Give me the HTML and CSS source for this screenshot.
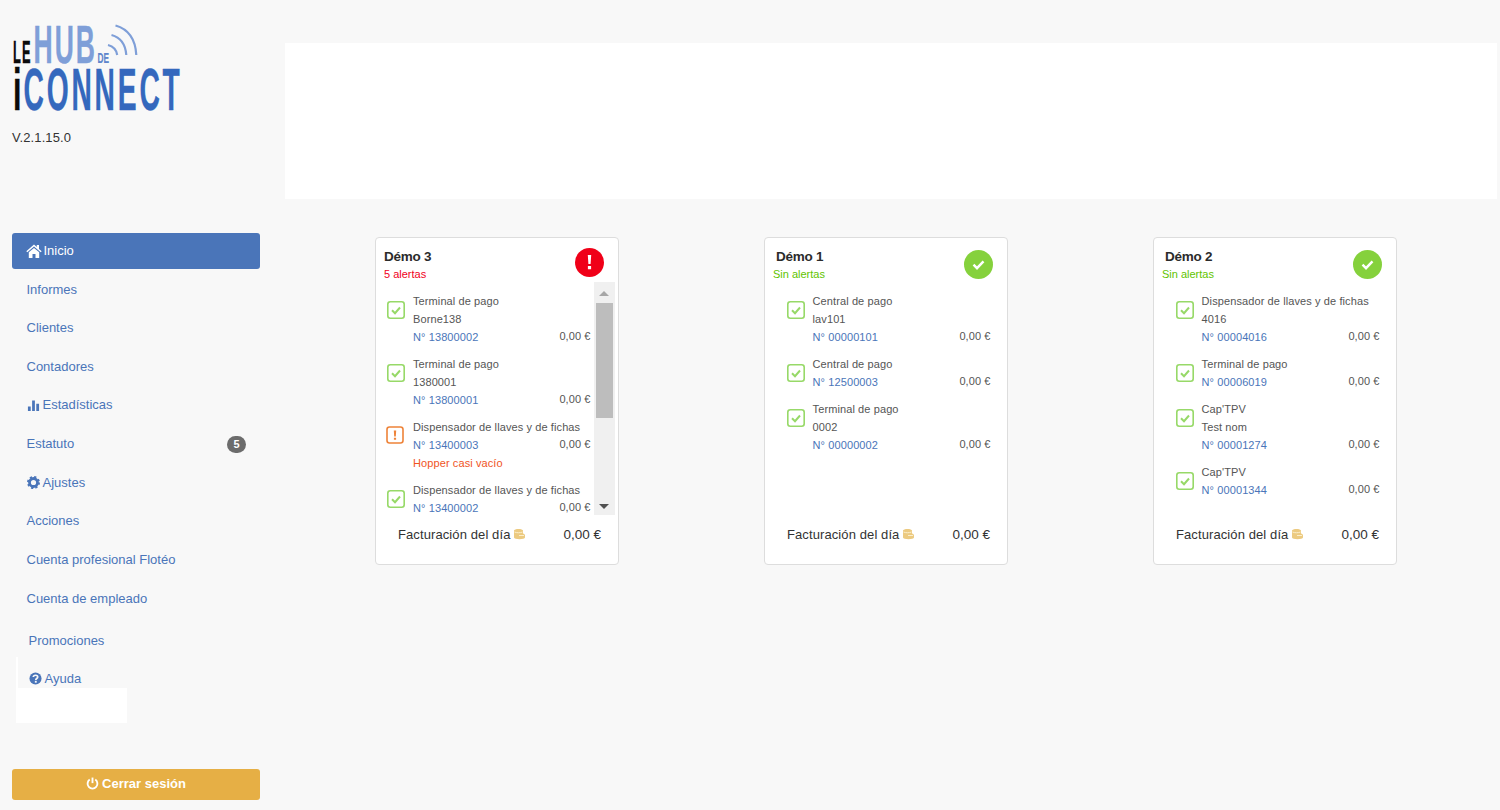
FILE: index.html
```html
<!DOCTYPE html>
<html lang="es">
<head>
<meta charset="utf-8">
<title>Le Hub de iConnect</title>
<link rel="stylesheet" href="styles.css">
</head>
<body>
<svg width="0" height="0" class="defs">
  <symbol id="check" viewBox="0 0 18 18">
    <rect x=".8" y=".8" width="16.400" height="16.400" rx="2.5" fill="#fff" stroke="#97d968" stroke-width="1.6"/>
    <path d="M5 9.200 8 12.200l5-5.700" fill="none" stroke="#97d968" stroke-width="2"/>
  </symbol>
  <symbol id="coin" viewBox="0 0 12 12">
    <path d="M1 2.600C1 .4 10 .4 10 2.600V5.500C11.200 5.800 12 6.500 12 7.500V9.500C12 11.800 1 11.800 1 9.500Z" fill="#ecca80"/>
    <path d="M1.500 4C3.500 5 7.500 5 9.500 4M6 7.500H11" fill="none" stroke="#fbeecb" stroke-width="1"/>
  </symbol>
</svg>
<aside class="sidebar">
  <svg class="logo" width="170" height="90" viewBox="12 25 170 90">
    <text class="lg lg-black" transform="translate(13 63) scale(.42 1)" font-size="30.5" letter-spacing="3">LE</text>
    <text class="lg lg-light" transform="translate(33.5 63) scale(.5 1)" font-size="53" letter-spacing="4">HUB</text>
    <text class="lg lg-mid" x="97.5" y="63" font-size="15.5" textLength="11.5" lengthAdjust="spacingAndGlyphs">DE</text>
    <text class="lg lg-black" x="13" y="110" font-size="60" textLength="8.5" lengthAdjust="spacingAndGlyphs">i</text>
    <text class="lg lg-blue" transform="translate(23.5 110) scale(.47 1)" font-size="60" letter-spacing="6">CONNECT</text>
    <path class="wave" d="M115.500 25.500Q135 31 136.300 55M111.500 35Q125 38.500 126.300 55M108 45Q116 47 117.200 55"/>
  </svg>
  <p class="version">V.2.1.15.0</p>
  <nav class="nav">
    <a class="nav-link active">
      <svg class="ic ic-home" viewBox="0 0 16 16"><path d="M8 1.500.3 8.300l1 1L8 3.600l6.700 5.700 1-1L13 6V2h-2.200v2.100ZM2.800 9.300V15h3.700v-4h3v4h3.700V9.300L8 5Z"/></svg>Inicio
    </a>
    <a class="nav-link">Informes</a>
    <a class="nav-link">Clientes</a>
    <a class="nav-link">Contadores</a>
    <a class="nav-link">
      <svg class="ic" viewBox="0 0 14 14"><path d="M1 8h3v5H1ZM5.500 1.500h3V13h-3ZM10 5h3v8h-3Z"/></svg>Estadísticas
    </a>
    <a class="nav-link">Estatuto<span class="badge">5</span></a>
    <a class="nav-link">
      <svg class="ic" viewBox="0 0 14 14"><circle cx="7" cy="7" r="4.300" fill="none" stroke="currentColor" stroke-width="3"/><circle cx="7" cy="7" r="6" fill="none" stroke="currentColor" stroke-width="2" stroke-dasharray="2.400 2.312"/></svg>Ajustes
    </a>
    <a class="nav-link">Acciones</a>
    <a class="nav-link">Cuenta profesional Flotéo</a>
    <a class="nav-link">Cuenta de empleado</a>
    <a class="nav-link nav-promo">Promociones</a>
    <a class="nav-link nav-help">
      <svg class="ic ic-help" viewBox="0 0 14 14"><circle cx="7" cy="7" r="6.500"/><path d="M4.600 5.400C4.800 2.900 9.400 2.900 9.400 5.400 9.400 7 7.300 7 7.300 8.500" fill="none" stroke="#f8f8f8" stroke-width="1.800"/><rect x="6.300" y="9.500" width="2" height="2" fill="#f8f8f8"/></svg>Ayuda
    </a>
  </nav>
  <div class="blank"></div>
  <a class="logout">
    <svg class="ic" viewBox="0 0 14 14"><path d="M4 2.800a5.300 5.300 0 1 0 6 0" fill="none" stroke="#fff" stroke-width="2"/><path d="M7 .6v6" stroke="#fff" stroke-width="2"/></svg>Cerrar sesión
  </a>
</aside>
<main class="main">
  <div class="banner"></div>
  <section class="cards">
    <article class="card card-scroll">
      <header class="card-head">
        <div class="titles"><h2>Démo 3</h2><p class="alerts bad">5 alertas</p></div>
        <svg class="status" viewBox="0 0 29 29"><circle cx="14.500" cy="14.500" r="14.500" fill="#f00018"/><path d="M12.800 7h3.400l-.6 9h-2.200ZM12.900 18h3.200v3.200h-3.200Z" fill="#fff"/></svg>
      </header>
      <div class="card-body">
        <div class="list">
          <div class="item">
            <svg class="box"><use href="#check"/></svg>
            <div class="info"><div>Terminal de pago</div><div>Borne138</div><div class="row"><span class="num">N° 13800002</span><span class="amt">0,00 €</span></div></div>
          </div>
          <div class="item">
            <svg class="box"><use href="#check"/></svg>
            <div class="info"><div>Terminal de pago</div><div>1380001</div><div class="row"><span class="num">N° 13800001</span><span class="amt">0,00 €</span></div></div>
          </div>
          <div class="item">
            <svg class="box box-warn" viewBox="0 0 18 18"><rect x="1" y="1" width="16" height="16" rx="2.500" fill="#fff" stroke="#ee8339" stroke-width="1.600"/><path d="M7.800 4.500h2.400l-.4 6H8.200ZM7.900 11.700h2.200v2.100H7.900Z" fill="#ee8339"/></svg>
            <div class="info"><div>Dispensador de llaves y de fichas</div><div class="row"><span class="num">N° 13400003</span><span class="amt">0,00 €</span></div><div class="warn">Hopper casi vacío</div></div>
          </div>
          <div class="item">
            <svg class="box"><use href="#check"/></svg>
            <div class="info"><div>Dispensador de llaves y de fichas</div><div class="row"><span class="num">N° 13400002</span><span class="amt">0,00 €</span></div></div>
          </div>
        </div>
        <div class="scrollbar">
          <span class="arrow up"></span>
          <span class="thumb"></span>
          <span class="arrow down"></span>
        </div>
      </div>
      <footer class="card-foot"><span class="foot-label">Facturación del día<svg class="coin"><use href="#coin"/></svg></span><span>0,00 €</span></footer>
    </article>

    <article class="card">
      <header class="card-head">
        <div class="titles"><h2 class="inset">Démo 1</h2><p class="alerts ok">Sin alertas</p></div>
        <svg class="status status-ok" viewBox="0 0 29 29"><circle cx="14.500" cy="14.500" r="14.500" fill="#85d13c"/><path d="M9.500 14.700l3.500 3.500 6.500-6.800" fill="none" stroke="#fff" stroke-width="2.400"/></svg>
      </header>
      <div class="card-body">
        <div class="list">
          <div class="item">
            <svg class="box"><use href="#check"/></svg>
            <div class="info"><div>Central de pago</div><div>lav101</div><div class="row"><span class="num">N° 00000101</span><span class="amt">0,00 €</span></div></div>
          </div>
          <div class="item">
            <svg class="box"><use href="#check"/></svg>
            <div class="info"><div>Central de pago</div><div class="row"><span class="num">N° 12500003</span><span class="amt">0,00 €</span></div></div>
          </div>
          <div class="item">
            <svg class="box"><use href="#check"/></svg>
            <div class="info"><div>Terminal de pago</div><div>0002</div><div class="row"><span class="num">N° 00000002</span><span class="amt">0,00 €</span></div></div>
          </div>
        </div>
      </div>
      <footer class="card-foot"><span class="foot-label">Facturación del día<svg class="coin"><use href="#coin"/></svg></span><span>0,00 €</span></footer>
    </article>

    <article class="card">
      <header class="card-head">
        <div class="titles"><h2 class="inset">Démo 2</h2><p class="alerts ok">Sin alertas</p></div>
        <svg class="status status-ok" viewBox="0 0 29 29"><circle cx="14.500" cy="14.500" r="14.500" fill="#85d13c"/><path d="M9.500 14.700l3.500 3.500 6.500-6.800" fill="none" stroke="#fff" stroke-width="2.400"/></svg>
      </header>
      <div class="card-body">
        <div class="list">
          <div class="item">
            <svg class="box"><use href="#check"/></svg>
            <div class="info"><div>Dispensador de llaves y de fichas</div><div>4016</div><div class="row"><span class="num">N° 00004016</span><span class="amt">0,00 €</span></div></div>
          </div>
          <div class="item">
            <svg class="box"><use href="#check"/></svg>
            <div class="info"><div>Terminal de pago</div><div class="row"><span class="num">N° 00006019</span><span class="amt">0,00 €</span></div></div>
          </div>
          <div class="item">
            <svg class="box"><use href="#check"/></svg>
            <div class="info"><div>Cap'TPV</div><div>Test nom</div><div class="row"><span class="num">N° 00001274</span><span class="amt">0,00 €</span></div></div>
          </div>
          <div class="item">
            <svg class="box"><use href="#check"/></svg>
            <div class="info"><div>Cap'TPV</div><div class="row"><span class="num">N° 00001344</span><span class="amt">0,00 €</span></div></div>
          </div>
        </div>
      </div>
      <footer class="card-foot"><span class="foot-label">Facturación del día<svg class="coin"><use href="#coin"/></svg></span><span>0,00 €</span></footer>
    </article>
  </section>
</main>
</body>
</html>
```
FILE: styles.css
```css
* { box-sizing: border-box; }
html, body { margin: 0; height: 810px; overflow: hidden; }
body {
  display: flex;
  background: #f8f8f8;
  font-family: "Liberation Sans", Arial, sans-serif;
  font-size: 13px;
  color: #333;
}
.defs { position: absolute; }

/* Sidebar */
.sidebar {
  flex: 0 0 285px;
  display: flex;
  flex-direction: column;
  height: 810px;
  padding: 25px 25px 10px 12px;
}
.logo { display: block; flex: none; overflow: visible; }
.lg { font-family: "Liberation Sans", Arial, sans-serif; font-weight: 700; stroke-width: .4; }
.lg-black { fill: #0b0b0b; stroke: #0b0b0b; }
.lg-light { fill: #7f9fd8; stroke: #7f9fd8; }
.lg-mid { fill: #5f86cc; stroke: #5f86cc; stroke-width: .2; }
.lg-blue { fill: #3468bd; stroke: #3468bd; }
.wave { fill: none; stroke: #7f9fd8; stroke-width: 2.2; }
.version { margin: 15px 0 0; font-size: 13px; line-height: 16px; height: 16px; letter-spacing: .1px; }

.nav { display: flex; flex-direction: column; margin-top: 86.850px; }
.nav-link {
  display: flex;
  align-items: center;
  height: 36px;
  margin-bottom: 2.67px;
  padding: 0 14px 0 14.500px;
  color: #4a75b9;
  line-height: 36px;
  white-space: nowrap;
}
.nav-link.active { background: #4a75b9; color: #fff; border-radius: 3px; padding-left: 14px; }
.ic { flex: none; width: 13px; height: 13px; margin-right: 3px; fill: currentColor; }
.ic-home { width: 16px; height: 16px; margin-right: 1.500px; }
.ic-help { margin: 0 2.500px 2px 0; }
.badge {
  margin-left: auto;
  width: 19px;
  height: 17px;
  border-radius: 9px;
  background: #6c6c6c;
  color: #fff;
  font-size: 11px;
  font-weight: 700;
  line-height: 17px;
  text-align: center;
}
.nav-promo { margin-top: 3.300px; padding-left: 16.500px; margin-bottom: 0; }
.nav-help {
  margin: -2px 0 0 4px;
  padding: 0 0 1px 11px;
  height: 31px;
  border-left: 2px solid #fff;
  line-height: 16px;
  align-items: flex-end;
}
.blank { width: 111px; height: 35px; margin-left: 4px; background: #fff; flex: none; }
.logout {
  display: flex;
  align-items: center;
  justify-content: center;
  height: 31px;
  width: 248px;
  margin-top: auto;
  padding-bottom: 3px;
  border-radius: 3px;
  background: #e6af45;
  color: #fff;
  font-weight: 700;
}

/* Main */
.main { flex: 1; padding: 43px 3px 0 0; }
.banner { height: 156px; background: #fff; }
.cards { display: flex; gap: 145.400px; margin-top: 38px; padding-left: 90px; }
.card {
  flex: 0 0 243.600px;
  height: 328px;
  display: flex;
  flex-direction: column;
  background: #fff;
  border: 1px solid #ddd;
  border-radius: 4px;
}
.card-head { display: flex; justify-content: space-between; height: 44px; padding: 0 14px 0 8px; }
.titles { padding-top: 10px; }
.titles h2 { margin: 0; font-size: 13.500px; font-weight: 700; line-height: 17px; letter-spacing: -.25px; color: #2b2b2b; }
.titles h2.inset { padding-left: 3px; }
.alerts { margin: 0; font-size: 11px; line-height: 18px; }
.bad { color: #f0001c; }
.ok { color: #5fc400; }
.status { width: 29px; height: 29px; margin-top: 10px; }
.status-ok { margin-top: 12px; }

.card-body { flex: none; display: flex; height: 233px; overflow: hidden; }
.list { flex: 1; min-width: 0; padding: 10px 16px 0 21.600px; font-size: 11px; line-height: 18px; letter-spacing: .1px; color: #555; }
.card-scroll .list { padding: 10px 3px 0 11px; }
.item { display: flex; margin-bottom: 9px; }
.box { flex: none; width: 18px; height: 18px; margin: 9px 8px 0 0; }
.box-warn { margin: 8px 9px 0 -1px; }
.info { flex: 1; min-width: 0; }
.row { display: flex; justify-content: space-between; }
.num { color: #4a75b9; }
.amt { position: relative; top: -1px; }
.warn { color: #f0541e; }

.scrollbar {
  flex: none;
  width: 21px;
  margin-right: 3px;
  display: flex;
  flex-direction: column;
  align-items: center;
  background: #f0f0f0;
}
.thumb { width: 17px; height: 115px; margin-top: 7px; background: #bdbdbd; }
.arrow { width: 0; height: 0; border-left: 5px solid transparent; border-right: 5px solid transparent; }
.arrow.up { margin-top: 9px; border-bottom: 5px solid #a6a6a6; }
.arrow.down { margin-top: auto; margin-bottom: 6px; border-top: 5px solid #505050; }

.card-foot {
  display: flex;
  justify-content: space-between;
  align-items: center;
  height: 38px;
  padding: 0 16.500px 0 22px;
  font-size: 13.500px;
  color: #333;
}
.foot-label { display: flex; align-items: center; white-space: nowrap; font-size: 13px; letter-spacing: .1px; }
.coin { width: 12px; height: 12px; margin-left: 3px; }
```
